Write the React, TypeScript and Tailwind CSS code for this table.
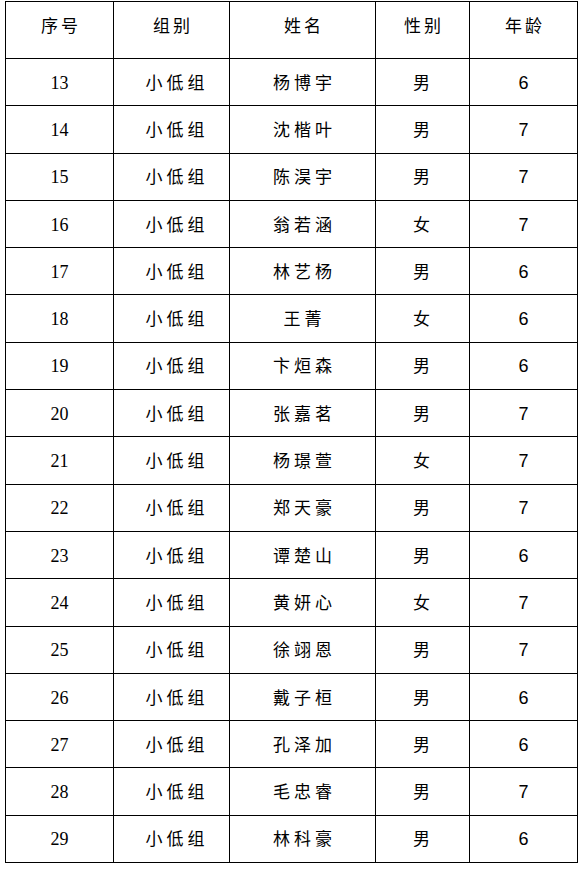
const rows: [number, string, string, number][] = [
  [13, "杨博宇", "男", 6],
  [14, "沈楷叶", "男", 7],
  [15, "陈淏宇", "男", 7],
  [16, "翁若涵", "女", 7],
  [17, "林艺杨", "男", 6],
  [18, "王菁", "女", 6],
  [19, "卞烜森", "男", 6],
  [20, "张嘉茗", "男", 7],
  [21, "杨璟萱", "女", 7],
  [22, "郑天豪", "男", 7],
  [23, "谭楚山", "男", 6],
  [24, "黄妍心", "女", 7],
  [25, "徐翊恩", "男", 7],
  [26, "戴子桓", "男", 6],
  [27, "孔泽加", "男", 6],
  [28, "毛忠睿", "男", 7],
  [29, "林科豪", "男", 6],
]

// CJK cells use a little letter spacing, like the source sheet
const cjk = "font-['Noto_Sans_CJK_SC',sans-serif] text-[17px] tracking-[4px] pb-[2px]"
const cell = "border-[1.5px] border-black text-center align-middle p-0 leading-none"

export default function App() {
  return (
    <div className="w-[582px] h-[869px] bg-white pt-px pl-[5px] text-black">
      <table className="border-collapse table-fixed w-[572px]">
        <colgroup>
          <col className="w-[108px]" />
          <col className="w-[116px]" />
          <col className="w-[146px]" />
          <col className="w-[94px]" />
          <col className="w-[108px]" />
        </colgroup>
        <thead>
          <tr className="h-[57px]">
            {["序号", "组别", "姓名", "性别", "年龄"].map((h) => (
              <th
                key={h}
                className={`${cell} font-normal font-['Noto_Sans_CJK_SC',sans-serif] text-[17px] tracking-[3px] pl-[3px] pb-[12px]`}
              >
                {h}
              </th>
            ))}
          </tr>
        </thead>
        <tbody>
          {rows.map(([no, name, sex, age]) => (
            <tr key={no} className="h-[47.3px]">
              <td className={`${cell} font-['Liberation_Serif',serif] text-[18px] pt-[1px]`}>{no}</td>
              <td className={`${cell} ${cjk} pl-[11px]`}>小低组</td>
              <td className={`${cell} ${cjk} pl-[4px]`}>{name}</td>
              <td className={`${cell} ${cjk} pl-[2px]`}>{sex}</td>
              <td className={`${cell} font-['Liberation_Sans',sans-serif] text-[18px] pt-[1px]`}>{age}</td>
            </tr>
          ))}
        </tbody>
      </table>
    </div>
  )
}
